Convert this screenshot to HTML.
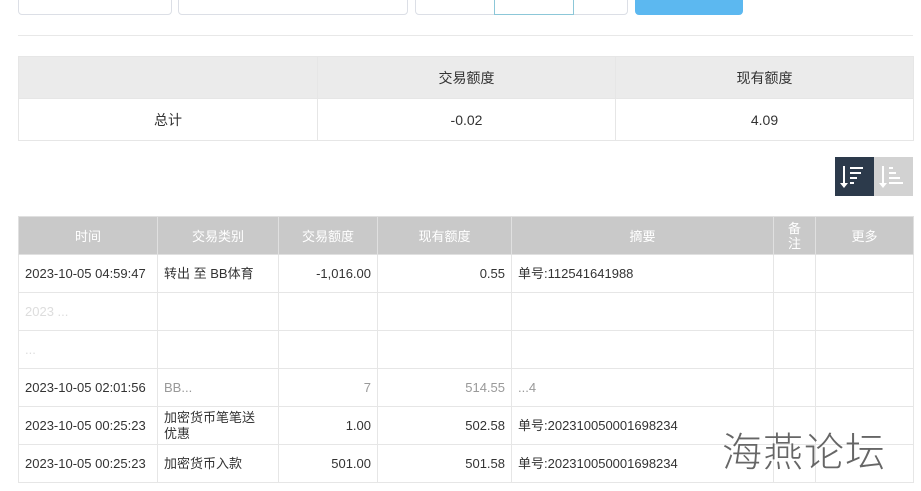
<!DOCTYPE html>
<html><head><meta charset="utf-8"><style>
*{box-sizing:border-box;margin:0;padding:0}
body{width:921px;height:491px;background:#fff;font-family:"Liberation Sans","Noto Sans CJK SC",sans-serif;font-size:13px;color:#333;position:relative;overflow:hidden}
.abs{position:absolute}
.box{border:1px solid #dcdfe6;border-radius:4px;background:#fff}
table{border-collapse:collapse;position:absolute;left:18px;table-layout:fixed}
td,th{border:1px solid #e6e6e6;font-weight:normal}
.sum{top:56px;width:895px}
.sum th{background:#ebebeb;height:42px;font-size:14px;color:#333}
.sum td{height:42px;text-align:center;font-size:14px}
.main{top:216px;width:895px}
.main th{background:#c9c9c9;color:#fff;height:38px;font-size:13px;border-color:#e0e0e0}
.main td{height:38px;padding:0 6px;font-size:13px;line-height:16px}
.r{text-align:right}
</style></head><body>
<div class="abs box" style="left:18px;top:-20px;width:154px;height:35px"></div>
<div class="abs box" style="left:178px;top:-20px;width:230px;height:35px"></div>
<div class="abs box" style="left:415px;top:-20px;width:213px;height:35px"></div>
<div class="abs" style="left:494px;top:-20px;width:80px;height:35px;border:1px solid #8cc7d8"></div>
<div class="abs" style="left:635px;top:-20px;width:108px;height:35px;background:#5cb8f0;border-radius:4px"></div>
<div class="abs" style="left:18px;top:35px;width:895px;height:1px;background:#e8e8e8"></div>
<table class="sum"><colgroup><col style="width:299px"><col style="width:298px"><col style="width:298px"></colgroup>
<tr><th></th><th>交易额度</th><th>现有额度</th></tr>
<tr><td>总计</td><td>-0.02</td><td>4.09</td></tr></table>
<div class="abs" style="left:835px;top:157px;width:39px;height:39px;background:#2c3a4b">
<svg width="39" height="39"><g stroke="#fff" stroke-width="2"><line x1="9" y1="9" x2="9" y2="28"/><line x1="15" y1="11" x2="28" y2="11"/><line x1="15" y1="16" x2="26" y2="16"/><line x1="15" y1="21" x2="22" y2="21"/><line x1="15" y1="26" x2="19" y2="26"/></g><path d="M5 26 L9 31 L13 26Z" fill="#fff"/></svg></div>
<div class="abs" style="left:874px;top:157px;width:39px;height:39px;background:#d2d2d2">
<svg width="39" height="39"><g stroke="#fff" stroke-width="2"><line x1="9" y1="9" x2="9" y2="28"/><line x1="15" y1="11" x2="19" y2="11"/><line x1="15" y1="16" x2="22" y2="16"/><line x1="15" y1="21" x2="26" y2="21"/><line x1="15" y1="26" x2="29" y2="26"/></g><path d="M5 26 L9 31 L13 26Z" fill="#fff"/></svg></div>
<table class="main"><colgroup><col style="width:139px"><col style="width:121px"><col style="width:99px"><col style="width:134px"><col style="width:262px"><col style="width:42px"><col style="width:98px"></colgroup>
<tr><th>时间</th><th>交易类别</th><th>交易额度</th><th>现有额度</th><th>摘要</th><th style="line-height:15px">备<br>注</th><th>更多</th></tr>
<tr><td>2023-10-05 04:59:47</td><td>转出 至 BB体育</td><td class="r">-1,016.00</td><td class="r">0.55</td><td>单号:112541641988</td><td></td><td></td></tr>
<tr><td style="color:#ddd">2023 ...</td><td></td><td></td><td></td><td></td><td></td><td></td></tr>
<tr><td style="color:#ddd">...</td><td></td><td></td><td></td><td></td><td></td><td></td></tr>
<tr><td>2023-10-05 02:01:56</td><td style="color:#999">BB...</td><td class="r" style="color:#999">7</td><td class="r" style="color:#999">514.55</td><td style="color:#999">...4</td><td></td><td></td></tr>
<tr><td>2023-10-05 00:25:23</td><td>加密货币笔笔送<br>优惠</td><td class="r">1.00</td><td class="r">502.58</td><td>单号:202310050001698234</td><td></td><td></td></tr>
<tr><td>2023-10-05 00:25:23</td><td>加密货币入款</td><td class="r">501.00</td><td class="r">501.58</td><td>单号:202310050001698234</td><td></td><td></td></tr>
</table>
<div class="abs" style="left:722px;top:420px;font-size:40px;color:#666;letter-spacing:1px;font-family:'Noto Sans CJK SC',sans-serif;font-weight:300">海燕论坛</div>
</body></html>
